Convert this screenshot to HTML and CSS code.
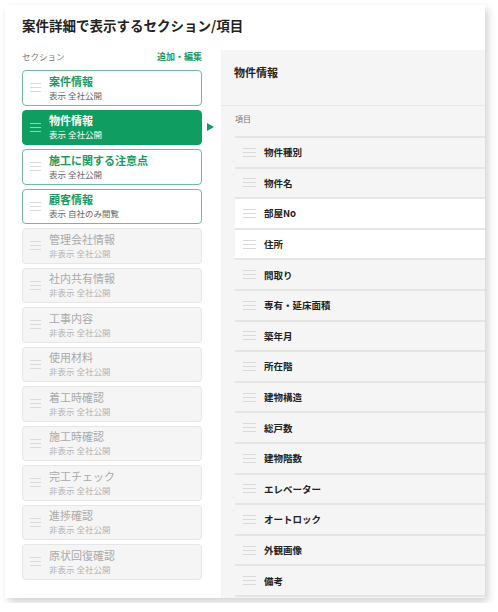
FILE: index.html
```html
<!DOCTYPE html>
<html lang="ja">
<head>
    <meta charset="UTF-8">
    <meta name="viewport" content="width=device-width, initial-scale=1.0">
    <title>案件詳細で表示するセクション/項目</title>
    <link rel="stylesheet" href="styles.css">
</head>
<body>
    <div class="sheet">
        <h1 class="sheet-title">案件詳細で表示するセクション/項目</h1>
        <div class="sheet-body">
            <div class="sections">
                <div class="sections-head">
                    <span class="label">セクション</span>
                    <a class="edit-link">追加・編集</a>
                </div>
                <ul class="section-list">
                    <li class="section"><span class="handle"></span><div><div class="section-name">案件情報</div><div class="section-meta">表示 全社公開</div></div></li>
                    <li class="section active"><span class="handle"></span><div><div class="section-name">物件情報</div><div class="section-meta">表示 全社公開</div></div></li>
                    <li class="section"><span class="handle"></span><div><div class="section-name">施工に関する注意点</div><div class="section-meta">表示 全社公開</div></div></li>
                    <li class="section"><span class="handle"></span><div><div class="section-name">顧客情報</div><div class="section-meta">表示 自社のみ閲覧</div></div></li>
                    <li class="section off"><span class="handle"></span><div><div class="section-name">管理会社情報</div><div class="section-meta">非表示 全社公開</div></div></li>
                    <li class="section off"><span class="handle"></span><div><div class="section-name">社内共有情報</div><div class="section-meta">非表示 全社公開</div></div></li>
                    <li class="section off"><span class="handle"></span><div><div class="section-name">工事内容</div><div class="section-meta">非表示 全社公開</div></div></li>
                    <li class="section off"><span class="handle"></span><div><div class="section-name">使用材料</div><div class="section-meta">非表示 全社公開</div></div></li>
                    <li class="section off"><span class="handle"></span><div><div class="section-name">着工時確認</div><div class="section-meta">非表示 全社公開</div></div></li>
                    <li class="section off"><span class="handle"></span><div><div class="section-name">施工時確認</div><div class="section-meta">非表示 全社公開</div></div></li>
                    <li class="section off"><span class="handle"></span><div><div class="section-name">完工チェック</div><div class="section-meta">非表示 全社公開</div></div></li>
                    <li class="section off"><span class="handle"></span><div><div class="section-name">進捗確認</div><div class="section-meta">非表示 全社公開</div></div></li>
                    <li class="section off"><span class="handle"></span><div><div class="section-name">原状回復確認</div><div class="section-meta">非表示 全社公開</div></div></li>
                </ul>
            </div>

            <div class="detail">
                <div class="detail-head">物件情報</div>
                <div class="detail-label">項目</div>
                <ul class="field-list">
                    <li class="field"><span class="handle"></span>物件種別</li>
                    <li class="field"><span class="handle"></span>物件名</li>
                    <li class="field white"><span class="handle"></span>部屋No</li>
                    <li class="field white"><span class="handle"></span>住所</li>
                    <li class="field"><span class="handle"></span>間取り</li>
                    <li class="field"><span class="handle"></span>専有・延床面積</li>
                    <li class="field"><span class="handle"></span>築年月</li>
                    <li class="field"><span class="handle"></span>所在階</li>
                    <li class="field"><span class="handle"></span>建物構造</li>
                    <li class="field"><span class="handle"></span>総戸数</li>
                    <li class="field"><span class="handle"></span>建物階数</li>
                    <li class="field"><span class="handle"></span>エレベーター</li>
                    <li class="field"><span class="handle"></span>オートロック</li>
                    <li class="field"><span class="handle"></span>外観画像</li>
                    <li class="field"><span class="handle"></span>備考</li>
                </ul>
            </div>
        </div>
    </div>
</body>
</html>
```

FILE: styles.css
```css
body {
    margin: 0;
    background: #fff;
    font-family: "Noto Sans CJK JP", "Noto Sans", sans-serif;
    color: #222;
}
ul {
    list-style: none;
    margin: 0;
    padding: 0;
}
.sheet {
    margin: 5px;
    width: 480px;
    height: 593px;
    background: #fff;
    box-shadow: 3px 4px 8px rgba(0, 0, 0, 0.18);
    overflow: hidden;
}
.sheet-title {
    margin: 10px 17px 15px;
    font-size: 13.5px;
    line-height: 20px;
    font-weight: 700;
    color: #222;
}
.sheet-body {
    display: flex;
    height: 548px;
}

/* left column */
.sections {
    width: 180px;
    margin-left: 17px;
    margin-right: 19px;
}
.sections-head {
    display: flex;
    justify-content: space-between;
    height: 20px;
    line-height: 12px;
}
.label {
    font-size: 8.5px;
    color: #777;
}
.edit-link {
    font-size: 9px;
    font-weight: 700;
    color: #1a9a63;
    padding-top: 1px;
}
.section-list {
    display: flex;
    flex-direction: column;
    gap: 4px;
}
.section {
    position: relative;
    display: flex;
    align-items: center;
    gap: 8px;
    box-sizing: border-box;
    height: 35.5px;
    padding: 0 7px;
    border: 1px solid #6dbd9c;
    border-radius: 4px;
    background: #fff;
}
.section-name {
    font-size: 11px;
    line-height: 14px;
    font-weight: 700;
    color: #1a9a63;
    margin-top: -1px;
}
.section-meta {
    font-size: 8.5px;
    line-height: 12px;
    margin-top: 1px;
    color: #666;
}
.section.active {
    background: #0f9d61;
    border-color: #0f9d61;
}
.section.active .section-name,
.section.active .section-meta {
    color: #fff;
}
.section.active::after {
    content: "";
    position: absolute;
    left: calc(100% + 6px);
    top: 50%;
    margin-top: -4.5px;
    border-top: 4.5px solid transparent;
    border-bottom: 4.5px solid transparent;
    border-left: 7px solid #0f9d61;
}
.section.off {
    background: #f5f5f5;
    border-color: #e6e6e6;
}
.section.off .section-name {
    font-weight: 400;
    color: #aaa;
}
.section.off .section-meta {
    color: #b3b3b3;
}

/* drag handle */
.handle {
    flex: none;
    width: 11px;
    height: 7px;
    border-top: 1px solid #dadada;
    border-bottom: 1px solid #dadada;
    background: linear-gradient(#dadada, #dadada) center / 100% 1px no-repeat;
}
.section.active .handle {
    border-color: rgba(255, 255, 255, 0.55);
    background-image: linear-gradient(rgba(255, 255, 255, 0.55), rgba(255, 255, 255, 0.55));
}

/* right panel */
.detail {
    flex: 1;
    background: #f5f5f5;
}
.detail-head {
    box-sizing: border-box;
    height: 56px;
    padding: 15px 13px 0;
    border-bottom: 1px solid #e8e8e8;
    font-size: 11px;
    line-height: 14px;
    font-weight: 700;
}
.detail-label {
    box-sizing: border-box;
    height: 30px;
    padding: 7px 14px 0;
    font-size: 8px;
    line-height: 12px;
    color: #777;
}
.field-list {
    margin-left: 14px;
}
.field {
    display: flex;
    align-items: center;
    gap: 8px;
    height: 28.6px;
    padding-left: 8px;
    border-top: 2px solid #e5e5e5;
    font-size: 9.5px;
    font-weight: 700;
    color: #222;
}
.field:last-child {
    border-bottom: 2px solid #e5e5e5;
}
.field.white {
    background: #fff;
}
.field .handle {
    width: 13px;
}
```
